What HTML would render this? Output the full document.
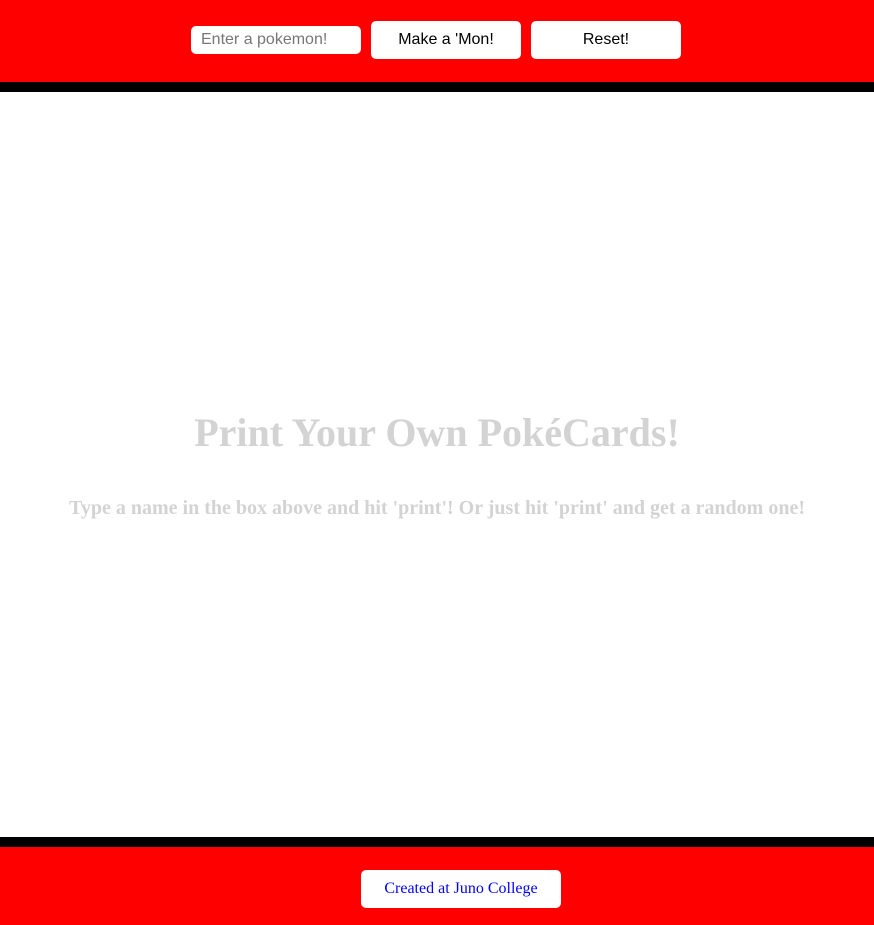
<!DOCTYPE html>
<html><head><style>
body{margin:0;width:874px;height:925px;position:relative;background:#fff;font-family:"Liberation Serif",serif;overflow:hidden}
.hd{position:absolute;left:0;top:0;width:874px;height:82px;background:#f00;border-bottom:10px solid #000}
.ft{position:absolute;left:0;top:837px;width:874px;height:78px;background:#f00;border-top:10px solid #000}
.in{position:absolute;left:191px;top:26px;width:170px;height:28px;background:#fff;border-radius:5px;font:16px "Liberation Sans",sans-serif;color:#777;line-height:28px;box-sizing:border-box;padding-left:10px}
.b{position:absolute;top:21px;width:150px;height:38px;background:#fff;border-radius:5px;font:16px "Liberation Sans",sans-serif;color:#000;text-align:center;line-height:38px}
.fb{position:absolute;left:361px;top:23px;width:200px;height:38px;background:#fff;border-radius:5px;color:#00f;font-size:16px;text-align:center;line-height:38px}
h1{position:absolute;top:410px;left:0;width:874px;margin:0;text-align:center;font-size:40px;color:#d3d3d3;line-height:46px}
p{position:absolute;top:496px;left:0;width:874px;margin:0;text-align:center;font-size:20px;font-weight:bold;color:#d3d3d3;line-height:24px;white-space:nowrap}
</style></head><body>
<div class="hd"><div class="in">Enter a pokemon!</div><div class="b" style="left:371px">Make a 'Mon!</div><div class="b" style="left:531px">Reset!</div></div>
<h1>Print Your Own PokéCards!</h1>
<p>Type a name in the box above and hit 'print'! Or just hit 'print' and get a random one!</p>
<div class="ft"><div class="fb">Created at Juno College</div></div>
</body></html>
